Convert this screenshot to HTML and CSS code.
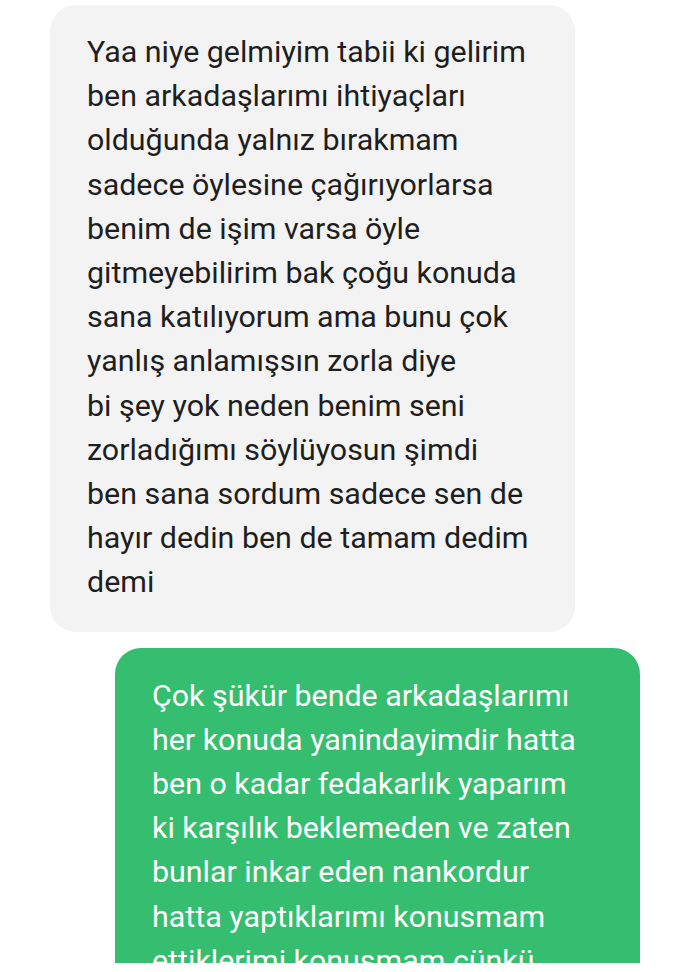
FILE: index.html
```html
<!DOCTYPE html>
<html lang="tr">
<head>
<meta charset="utf-8">
<link rel="stylesheet" href="styles.css">
</head>
<body>
<div class="chat">
  <div class="bubble in">Yaa niye gelmiyim tabii ki gelirim<br>ben arkadaşlarımı ihtiyaçları<br>olduğunda yalnız bırakmam<br>sadece öylesine çağırıyorlarsa<br>benim de işim varsa öyle<br>gitmeyebilirim bak çoğu konuda<br>sana katılıyorum ama bunu çok<br>yanlış anlamışsın zorla diye<br>bi şey yok neden benim seni<br>zorladığımı söylüyosun şimdi<br>ben sana sordum sadece sen de<br>hayır dedin ben de tamam dedim<br>demi</div>
  <div class="bubble out">Çok şükür bende arkadaşlarımı<br>her konuda yanindayimdir hatta<br>ben o kadar fedakarlık yaparım<br>ki karşılık beklemeden ve zaten<br>bunlar inkar eden nankordur<br>hatta yaptıklarımı konusmam<br>ettiklerimi konusmam çünkü<br>insanlara yardım etmeyi severim</div>
</div>
</body>
</html>
```

FILE: styles.css
```css
html, body {
  margin: 0;
  padding: 0;
  background: #ffffff;
}
.chat {
  height: 963px;
  overflow: hidden;
  padding-top: 5px;
  box-sizing: border-box;
  display: flex;
  flex-direction: column;
  gap: 16px;
}
.bubble {
  width: 525px;
  box-sizing: border-box;
  border-radius: 26px;
  font-family: Roboto, "Noto Sans", sans-serif;
  font-size: 30.4px;
  line-height: 44.2px;
  white-space: nowrap;
  padding-left: 37px;
}
.in {
  margin-left: 50px;
  background: #f3f3f3;
  color: #1e1e1e;
  padding-top: 25px;
  padding-bottom: 27px;
}
.out {
  margin-left: 115px;
  background: #35be6f;
  color: #ffffff;
  padding-top: 26px;
  padding-bottom: 30px;
}
```
